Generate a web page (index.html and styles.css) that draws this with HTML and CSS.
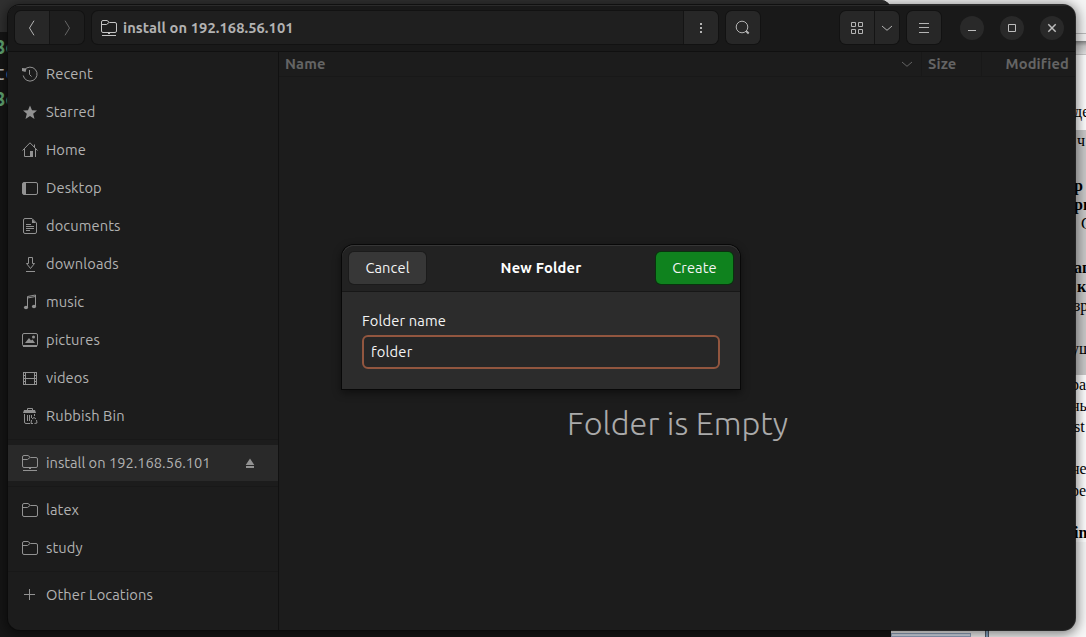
FILE: index.html
```html
<!DOCTYPE html>
<html lang="en">
<head>
<meta charset="utf-8">
<title>Files</title>
<link rel="stylesheet" href="styles.css">
</head>
<body>
<svg class="defs" width="0" height="0">
  <symbol id="folder" viewBox="0 0 16 16"><path d="M.5 13V3Q.5 1.500 2 1.500H6L8.500 3.500H14Q15.500 3.500 15.500 5V13Q15.500 14.500 14 14.500H2Q.5 14.500 .5 13M.5 5.500H5.500L8 3.500"/></symbol>
  <symbol id="remote" viewBox="0 0 16 16"><path d="M.5 11V2Q.5 .5 2 .5H6L8.500 2.500H14Q15.500 2.500 15.500 4V11Q15.500 12.500 14 12.500H2Q.5 12.500 .5 11M.5 4.500H5.500L8 2.500M1 15.500H15M7 13.500H9"/></symbol>
</svg>
<div class="desktop">
  <div class="terminal">
    <div class="term-bar"></div>
    <p class="prompt first">8c</p>
    <p class="plain">t<em>c</em></p>
    <p class="prompt">8c</p>
  </div>
  <div class="document">
    <div class="doc-tools"></div>
    <div class="doc-ruler"></div>
    <div class="doc-page">
      <p>де</p>
      <div class="selection">
        <p class="in3">ч</p>
        <p class="g27 b">р</p>
        <p class="g1 b">рг</p>
        <p class="g1 in6">С</p>
        <p class="g26 b">аг</p>
        <p class="g1 b in3">к</p>
        <p class="g1">зр</p>
        <p class="g25 back">ущ</p>
      </div>
      <p class="g1 back">ра</p>
      <p class="g3 back">нь</p>
      <p class="g3">st</p>
      <p class="g24 back">не</p>
      <p class="g4 back">ре</p>
      <p class="g24 b">in</p>
    </div>
  </div>
  <div class="dock"><span></span><i></i></div>

  <main class="window">
    <header class="titlebar">
      <div class="group nav">
        <button class="btn"><svg width="16" height="16"><path d="M10 .7L5.500 8L10 15.300"/></svg></button>
        <button class="btn off"><svg width="16" height="16"><path d="M6 .7L10.500 8L6 15.300"/></svg></button>
      </div>
      <div class="group path">
        <div class="crumb"><svg width="16" height="16"><use href="#remote"/></svg><b>install on 192.168.56.101</b></div>
        <button class="btn"><svg width="16" height="16"><path class="fill" d="M7 3h2v2H7zM7 7h2v2H7zM7 11h2v2H7z"/></svg></button>
      </div>
      <div class="group search">
        <button class="btn"><svg width="16" height="16"><circle cx="7" cy="7" r="5.800"/><path class="thick" d="M11 11L13.700 13.500"/></svg></button>
      </div>
      <div class="group view">
        <button class="btn"><svg width="16" height="16"><path d="M2.500 2.500h4v4h-4zM9.500 2.500h4v4h-4zM2.500 9.500h4v4h-4zM9.500 9.500h4v4h-4z"/></svg></button>
        <button class="btn narrow"><svg width="16" height="16"><path d="M3 6L8 10.300L13 6"/></svg></button>
      </div>
      <div class="group menu">
        <button class="btn"><svg width="16" height="16"><path d="M3 3.500H13M3 7.500H13M3 12.500H13"/></svg></button>
      </div>
      <div class="controls">
        <button class="round"><svg width="16" height="16"><path d="M4 10.500H12"/></svg></button>
        <button class="round"><svg width="16" height="16"><path d="M4.500 4.500h7v7h-7z"/></svg></button>
        <button class="round"><svg width="16" height="16"><path class="cross" d="M4.300 4.300L11.700 11.700M11.700 4.300L4.300 11.700"/></svg></button>
      </div>
    </header>
    <div class="content">
      <nav class="sidebar">
        <a class="row"><svg width="16" height="16"><path d="M2.400 4A7 7 0 1 1 1.200 9.500M7.500 4V8.500L9.500 10.500"/><path class="fill" d="M0 2L4.500 2.500L3.500 6L0 5z"/></svg><span>Recent</span></a>
        <a class="row"><svg width="16" height="16"><path class="fill" d="M8 1.500L10 6.300L15 6.500L11.200 9.800L12.500 15L8 12L3.500 15L4.800 9.800L1 6.500L6 6.300z"/></svg><span>Starred</span></a>
        <a class="row"><svg width="16" height="16"><path d="M.5 8.500L8 .8L15.500 8.500M2.500 7V14.500H8M13.500 7V15M12.500 5V2.500"/><path class="fill" d="M8 9H11V15H8z"/></svg><span>Home</span></a>
        <a class="row"><svg width="16" height="16"><rect x=".5" y="2.500" width="15" height="12" rx="1.500"/><path class="fill" d="M1 3H4V14H1z"/></svg><span>Desktop</span></a>
        <a class="row"><svg width="16" height="16"><path d="M10 .5H3Q1.500 .5 1.500 2V14Q1.500 15.500 3 15.500H13Q14.500 15.500 14.500 14V5zM4 6.500H9M4 8.500H12M4 10.500H12M4 12.500H8"/><path class="fill" d="M10 1V5H14z"/></svg><span>documents</span></a>
        <a class="row"><svg width="16" height="16"><path d="M6.500 1.500H10.500V7.500H12.500L8.500 12.500L4.500 7.500H6.500zM4 15.500H13"/></svg><span>downloads</span></a>
        <a class="row"><svg width="16" height="16"><path d="M5.500 13V2.500L13.500 1V12M5.500 4L13.500 2.500"/><ellipse class="fill" cx="4" cy="13.500" rx="2.100" ry="1.800"/><ellipse class="fill" cx="12" cy="12.500" rx="2.100" ry="1.800"/></svg><span>music</span></a>
        <a class="row"><svg width="16" height="16"><rect x=".5" y="1.500" width="15" height="12.500" rx="1.500"/><path class="fill" d="M3 11L7 6L9 8.500L10.500 7.500L13 11zM1 13H15V15H1z"/><circle class="fill" cx="11.500" cy="5" r="1.500"/></svg><span>pictures</span></a>
        <a class="row"><svg width="16" height="16"><path d="M1.500 2V15M14.500 2V15M3.500 2V15M12.500 2V15M3.500 2.500H12.500M3.500 8.500H12.500M3.500 14.500H12.500"/><path class="dash" d="M2.500 2V15M13.500 2V15"/></svg><span>videos</span></a>
        <a class="row"><svg width="16" height="16"><path d="M5.500 2V.5H10.500V2M2.500 6V14Q2.500 15.500 4 15.500H8M12.500 6V8M5.500 7V13M7.500 7V13M9.500 7V10"/><path class="fill" d="M2 2H13L14 5H1z"/><path d="M10 11L12 9.500L14 11M14.500 12L15 15L12.500 15.500M11 15.500H9L9.500 12"/></svg><span>Rubbish Bin</span></a>
        <hr class="before-mount">
        <a class="row mount"><svg width="16" height="16"><use href="#remote"/></svg><span class="host">install on 192.168.56.101</span><svg class="eject" width="16" height="16"><path class="fill" d="M8 3.500L12.300 10H3.700zM4 11H12V13H4z"/></svg></a>
        <hr class="after-mount">
        <a class="row"><svg width="16" height="16"><use href="#folder"/></svg><span>latex</span></a>
        <a class="row"><svg width="16" height="16"><use href="#folder"/></svg><span>study</span></a>
        <hr class="before-other">
        <a class="row"><svg width="16" height="16"><path d="M2 7.500H13M7.500 2V13"/></svg><span>Other Locations</span></a>
      </nav>
      <section class="files">
        <div class="columns">
          <div class="col name"><span>Name</span><svg width="16" height="16"><path d="M3 6L8 10.300L13 6"/></svg></div>
          <div class="col size"><span>Size</span></div>
          <div class="col modified"><span>Modified</span></div>
        </div>
        <div class="empty"><span>Folder is Empty</span></div>
      </section>
    </div>
  </main>

  <div class="dialog">
    <div class="dialog-head">
      <button class="action">Cancel</button>
      <h1>New Folder</h1>
      <button class="action create">Create</button>
    </div>
    <div class="dialog-body">
      <label for="fname">Folder name</label>
      <input id="fname" type="text" value="folder">
    </div>
  </div>
</div>
</body>
</html>
```
FILE: styles.css
```css
* { box-sizing: border-box; }
body { margin: 0; background: #171717; font: 14.667px/20px "Ubuntu", "Noto Sans", sans-serif; color: #b2b2b2; }
p, h1 { margin: 0; }
button { border: 0; padding: 0; font: inherit; color: inherit; background: none; }
.defs { position: absolute; }
svg { display: block; flex: none; fill: none; stroke: currentColor; stroke-width: 1; }
svg .fill { fill: currentColor; stroke: none; }
svg .thick { stroke-width: 2; }
svg .cross { stroke-width: 1.500; }
svg .dash { stroke-dasharray: 1 2; }

.desktop { position: relative; width: 1086px; height: 637px; overflow: hidden; }

/* Windows behind the file manager */
.terminal { position: absolute; left: 0; top: 0; width: 891px; height: 637px; background: #161616; border-radius: 0 10px 0 0; overflow: hidden; z-index: 1; }
.term-bar { height: 32px; background: #303030; }
.terminal p { height: 26px; font: 20px/26px "Ubuntu Mono", "Liberation Mono", monospace; margin-left: -6px; color: #bbb; }
.terminal em { font-style: normal; color: #5f86b5; }
.terminal .first { margin-top: 2px; }
.terminal .prompt { color: #62a873; font-weight: bold; }
.document { position: absolute; left: 880px; top: 0; right: 0; height: 637px; background: #f7f7f7; }
.doc-tools { height: 34px; background: #f4f4f4; border-bottom: 1px solid #bbb; }
.doc-ruler { height: 21px; background: linear-gradient(#f4f4f4 0 7px, #848484 7px, #c8c8c8 12px, #e4e4e4 20px); border-bottom: 1px solid #c6c6c6; }
.doc-page { padding-top: 48px; background: #fff; color: #000; }
.doc-page p { height: 18px; padding-left: 194px; font: 16px/18px "Liberation Serif", serif; white-space: nowrap; }
.doc-page .in3 { padding-left: 197px; }
.doc-page .in6 { padding-left: 201px; }
.doc-page .back { padding-left: 191px; }
.doc-page .b { font-weight: bold; }
.doc-page .g1 { margin-top: 1px; }
.doc-page .g3 { margin-top: 3px; }
.doc-page .g4 { margin-top: 4px; }
.doc-page .g24 { margin-top: 24px; }
.doc-page .g25 { margin-top: 25px; }
.doc-page .g26 { margin-top: 26px; }
.doc-page .g27 { margin-top: 27px; }
.selection { margin-top: 9px; padding: 2px 0 17px; background: #c9c9c9; }
.dock { position: absolute; left: 891px; top: 620px; width: 195px; height: 17px; display: flex; gap: 14px; padding-top: 13px; }
.dock span { width: 80px; border: 1px solid #94a5bf; background: #d7e0ec; }
.dock i { width: 4px; margin-top: -5px; background: #8baccb; border: solid #555f6b; border-width: 0 1px; }

/* File manager */
.window { position: absolute; z-index: 2; left: 8px; top: 5px; width: 1067px; height: 625px; display: flex; flex-direction: column; background: #1c1c1c; border-radius: 12px; overflow: hidden; }
.window { box-shadow: 0 0 0 1px #0b0b0bcc, 0 2px 12px 3px #0007, inset 0 1px #2b2b2b; }
.titlebar { height: 47px; flex: none; display: flex; align-items: center; padding: 0 11px 1px 7px; background: #191919; border-bottom: 1px solid #101010; box-shadow: inset 0 1px #2b2b2b; }
.group { height: 33px; display: flex; border-radius: 6px; box-shadow: 0 0 0 1px #121212; overflow: visible; }
.btn { display: grid; place-items: center; flex: 1; background: #272727; border-radius: 6px; color: #b4b4b4; }
.btn + .btn, .crumb + .btn { border-left: 1px solid #141414; border-radius: 0 6px 6px 0; }
.nav { width: 69px; }
.nav .btn:first-child { border-radius: 6px 0 0 6px; }
.nav .off { background: #1e1e1e; color: #666; }
.path { width: 626px; margin-left: 8px; background: #1f1f1f; }
.crumb { flex: 1; display: flex; align-items: center; gap: 6px; padding-left: 9px; color: #c4c4c4; }
.crumb b { color: #b2b2b2; letter-spacing: .08px; }
.path .btn { flex: 0 0 35px; }
.search { width: 34px; margin-left: 8px; }
.view { width: 59px; margin-left: 80px; }
.view .btn:first-child { border-radius: 6px 0 0 6px; }
.view .narrow { flex: 0 0 25px; }
.menu { width: 34px; margin-left: 8px; }
.controls { display: flex; gap: 16px; margin-left: auto; }
.round { width: 24px; height: 24px; display: grid; place-items: center; border-radius: 50%; background: #292929; color: #bdbdbd; }
.content { flex: 1; display: flex; min-height: 0; }
.sidebar { width: 271px; padding-top: 3px; border-right: 1px solid #111; }
.row { height: 38px; display: flex; align-items: center; gap: 8px; padding-left: 14px; color: #929292; }
.row span { color: #b2b2b2; white-space: nowrap; letter-spacing: .1px; }
.row .host { letter-spacing: 0; }
.sidebar hr { height: 1px; margin: 0; border: 0; background: #181818; }
.sidebar .before-mount { margin: 4px 0 5px; }
.sidebar .after-mount { margin: 5px 0 4px; }
.sidebar .before-other { margin: 4px 0; }
.mount { height: 36px; background: #292929; padding-right: 20px; }
.eject { margin-left: auto; }
.files { flex: 1; display: flex; flex-direction: column; min-width: 0; }
.columns { display: flex; height: 25px; border-bottom: 1px solid #181818; color: #646464; font-weight: bold; letter-spacing: .15px; }
.col { display: flex; align-items: center; justify-content: space-between; border-right: 1px solid #181818; }
.name { width: 643px; padding: 0 6px; }
.size { width: 60px; padding-left: 6px; }
.modified { flex: 1; justify-content: flex-end; padding-right: 6px; border: 0; }
.empty { flex: 1; display: grid; place-items: center; padding: 138px 0 0 1px; font: 300 32.500px/40px "Ubuntu", "Open Sans", sans-serif; color: #aaa; }

/* New folder dialog */
.dialog { position: absolute; z-index: 3; left: 342px; top: 245px; width: 398px; height: 144px; display: flex; flex-direction: column; background: #2c2c2c; border-radius: 12px 12px 0 0; box-shadow: 0 0 0 1px #080808, 0 3px 9px 1px #0007; color: #f4f4f4; }
.dialog-head { height: 47px; display: flex; align-items: center; justify-content: space-between; padding: 0 7px 1px; background: #222; border-radius: 12px 12px 0 0; border-bottom: 1px solid #171717; box-shadow: inset 0 1px #363636; }
.dialog h1 { font: bold 14.667px/20px "Ubuntu", "Noto Sans", sans-serif; letter-spacing: .2px; color: #fff; }
.action { width: 77px; height: 32px; border-radius: 5px; background: #373737; box-shadow: 0 0 0 1px #1b1b1b; letter-spacing: .1px; }
.create { background: #0f821e; box-shadow: 0 0 0 1px #09320e; }
.dialog-body { display: flex; flex-direction: column; gap: 4px; padding: 19px 20px; letter-spacing: .15px; }
.dialog-body input { height: 34px; padding: 0 7px 1px; border: 2px solid #92563f; border-radius: 6px; outline: 0; background: #272727; color: #f4f4f4; font: inherit; letter-spacing: .2px; }
```
